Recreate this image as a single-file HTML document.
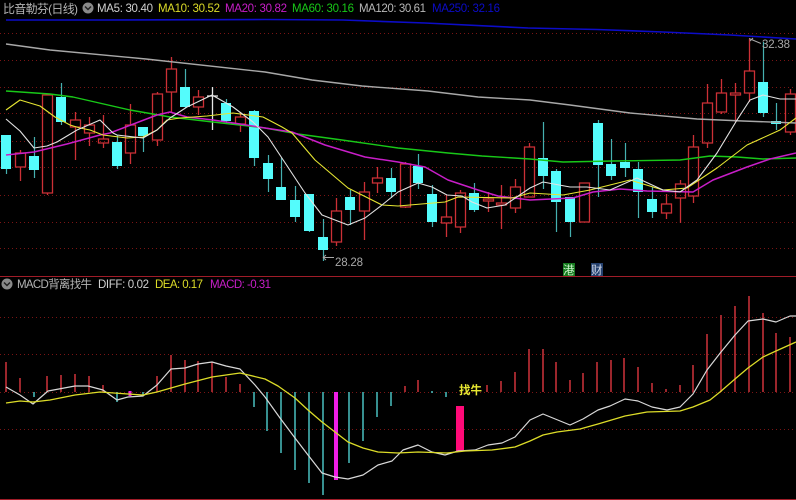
<!DOCTYPE html>
<html><head><meta charset="utf-8"><style>
html,body{margin:0;padding:0;background:#000;width:796px;height:500px;overflow:hidden}
svg{display:block;position:absolute;left:0;top:0}
text{font-family:"Liberation Sans","Noto Sans CJK SC",sans-serif;font-size:11.5px}
.l{fill:none;stroke-linejoin:round}
</style></head><body>
<svg width="796" height="500" viewBox="0 0 796 500" xmlns="http://www.w3.org/2000/svg">
<rect width="796" height="500" fill="#000"/>
<!-- grid -->
<path d="M0 33.5H796M0 60.5H796M0 87.5H796M0 113.5H796M0 141.5H796M0 167.5H796M0 195.5H796M0 222.5H796M0 248.5H796M0 317.5H796M0 354.5H796M0 392.5H796M0 429.5H796" stroke="#7a1414" stroke-width="1" stroke-dasharray="1 3" fill="none"/>
<path d="M0 276.5H796M0 499.5H796" stroke="#a01c28" stroke-width="1" fill="none"/>

<!-- cyan candle wicks -->
<path fill="none" stroke="#45b0b0" stroke-width="1.2" d="M6.5 135V174M34.5 137V178M61.5 83V125M117.5 135V169M143.5 127V152M185.5 69V108M226.5 99V124M254.5 110V166M268.5 155V192M281.5 158V200M295.5 186V222M309.5 194V232M323.5 219V261M350.5 190V225M391.5 168V198M418.5 154V189M432.5 185V227M474.5 183V212M543.5 122V189M556.5 169V232M570.5 197V237M598.5 120V197M611.5 139V180M625.5 143V177M638.5 162V218M652.5 187V218M763.5 42V117M776.5 103V130"/>
<!-- cyan bodies -->
<path fill="#54fcfc" d="M1 135h10v34h-10zM29 156h10v14h-10zM56 97h10v25h-10zM112 142h10v24h-10zM138 127h10v9h-10zM180 87h10v20h-10zM221 103h10v18h-10zM249 111h10v47h-10zM263 163h10v16h-10zM276 187h10v13h-10zM290 200h10v17h-10zM304 194h10v37h-10zM318 237h10v13h-10zM345 197h10v13h-10zM386 178h10v14h-10zM413 166h10v17h-10zM427 194h10v28h-10zM469 193h10v17h-10zM538 158h10v18h-10zM551 171h10v31h-10zM565 197h10v25h-10zM593 123h10v42h-10zM606 164h10v12h-10zM620 162h10v6h-10zM633 169h10v23h-10zM647 199h10v13h-10zM758 82h10v31h-10zM771 121h10v3h-10z"/>
<!-- red candles -->
<path fill="none" stroke="#cc3036" stroke-width="1.3" d="M20.5 150V153M15.5 153h10v14h-10zM20.5 167V181M47.5 94V95M42.5 95h10v98h-10zM47.5 193V195M75.5 112V120M70.5 120h10v7h-10zM75.5 127V160M89.5 117V125M84.5 125h10v8h-10zM89.5 133V146M103.5 115V139M98.5 139h10v4h-10zM103.5 143V148M130.5 104V125M125.5 125h10v28h-10zM130.5 153V164M157.5 92V94M152.5 94h10v46h-10zM157.5 140V146M171.5 57V69M166.5 69h10v23h-10zM171.5 92V112M198.5 90V97M193.5 97h10v10h-10zM198.5 107V115M240.5 112V117M235.5 117h10v7h-10zM240.5 124V132M336.5 198V211M331.5 211h10v31h-10zM336.5 242V246M364.5 182V192M359.5 192h10v19h-10zM364.5 211V240M377.5 167V178M372.5 178h10v5h-10zM377.5 183V193M405.5 162V164M400.5 164h10v43h-10zM405.5 207V208M446.5 195V217M441.5 217h10v6h-10zM446.5 223V237M460.5 190V193M455.5 193h10v34h-10zM460.5 227V233M488.5 192V199M483.5 199h10v2h-10zM488.5 201V212M501.5 185V203M496.5 203h10v2h-10zM501.5 205V229M515.5 179V187M510.5 187h10v21h-10zM515.5 208V213M529.5 143V147M524.5 147h10v50h-10zM579.5 183h10v39h-10zM666.5 194V204M661.5 204h10v9h-10zM666.5 213V219M680.5 180V184M675.5 184h10v14h-10zM680.5 198V223M693.5 135V147M688.5 147h10v49h-10zM693.5 196V203M707.5 84V103M702.5 103h10v40h-10zM707.5 143V148M721.5 79V93M716.5 93h10v19h-10zM721.5 112V114M735.5 83V93M730.5 93h10v2h-10zM735.5 95V122M749.5 39V71M744.5 71h10v22h-10zM749.5 93V102M790.5 89V94M785.5 94h10v38h-10zM790.5 132V135"/>
<!-- doji -->
<path fill="none" stroke="#e6e6e6" stroke-width="1.3" d="M212.5 87V130M207 96h11"/>

<!-- MA lines -->
<path class="l" stroke="#0c0cc8" stroke-width="1.6" d="M6 20L100 20L265 19.5L343 20L425 23L528 28L597 29.5L663 32L730 35L796 39"/>
<path class="l" stroke="#a8a8a8" stroke-width="1.4" d="M6 44L50 50L146 59L265 72L312 80L362 86L428 91L478 97L530 100L570 105L630 113L697 119L743 121L796 123"/>
<path class="l" stroke="#18c818" stroke-width="1.4" d="M6 91L50 94L73 97L130 110L170 117L213 122L265 128L298 134L342 140L398 148L448 153L482 156L530 159L563 162L613 161L680 160L710 156L737 157L763 159L796 158"/>
<path class="l" stroke="#c81ec8" stroke-width="1.5" d="M6 155L34 152L67 144L100 135L110 133L157 115L170 112L187 117L213 120L240 124L265 128L292 132L325 145L365 157L398 162L425 167L448 180L478 190L498 196L530 200L573 198L593 192L620 189L647 191L693 192L713 180L747 167L770 159L796 153"/>
<path class="l" stroke="#e6e632" stroke-width="1.1" d="M6 110L20 100L40 106L55 117L70 125L80 128L90 130L103 135L127 138L143 137L157 130L167 120L180 118L207 116L233 113L263 117L282 127L292 133L315 160L348 188L382 205L398 206L445 202L458 197L512 198L530 193L563 195L590 190L630 180L663 190L687 188L717 168L747 145L780 130L796 118"/>
<path class="l" stroke="#e2e2e2" stroke-width="1.1" d="M6 119L20 131L34 148L47 146L57 142L77 130L100 120L113 133L117 135L143 138L157 130L170 118L187 107L212 95L233 107L253 122L268 137L305 193L322 215L348 225L365 218L382 205L398 192L418 183L432 187L447 195L462 196L472 202L487 208L505 205L530 188L543 182L570 187L587 187L610 190L637 178L663 190L680 192L697 180L717 153L737 120L750 100L763 95L780 99L796 99"/>

<!-- price labels -->
<path fill="none" stroke="#a8a8a8" d="M323 257.5H334M323 257.5l3-2.5M323 257.5l3 2.5M749 38.5l12 5M750 41l3-3"/>
<text x="335" y="266" fill="#a8a8a8" textLength="28" lengthAdjust="spacing" font-size="11">28.28</text>
<text x="762" y="48" fill="#a8a8a8" textLength="28" lengthAdjust="spacing">32.38</text>

<!-- tags -->
<rect x="563" y="263" width="12" height="13" fill="#157a1e"/>
<rect x="591" y="263" width="12" height="13" fill="#24406e"/>
<text x="563" y="274" fill="#c8f0c8" style="font-size:11.5px">港</text>
<text x="591" y="274" fill="#d0d8e8" style="font-size:11.5px">财</text>

<!-- MACD bars -->
<path fill="none" stroke="#c23038" stroke-width="1.6" d="M6 392V362M20 392V378M47 392V376M61 392V375M75 392V374M89 392V376M103 392V385M157 392V376M171 392V355M185 392V360M198 392V361M212 392V362M226 392V377M240 392V384M405 392V386M418 392V380M487 392V385M501 392V381M515 392V372M529 392V349M543 392V349M556 392V362M570 392V380M583 392V373M597 392V362M611 392V360M624 392V358M638 392V367M652 392V383M666 392V389M680 392V385M693 392V365M707 392V334M721 392V315M735 392V306M749 392V296M763 392V313M776 392V333M790 392V337"/>
<path fill="none" stroke="#45b4b4" stroke-width="1.6" d="M34 392V397M117 392V402M143 392V395M254 392V407M267 392V431M281 392V453M295 392V470M309 392V483M323 392V495M349 392V463M363 392V441M377 392V417M391 392V406M432 391V393M446 392V397"/>
<path fill="#f01ee6" d="M128.500 391h3v5h-3zM334 392h4v88h-4z"/>
<rect x="456" y="406" width="8" height="45" fill="#ff0a78"/>

<!-- MACD lines -->
<path class="l" stroke="#d8d8d8" stroke-width="1.2" d="M6 387L20 395L33 404L48 391L75 386L88 386L103 390L117 400L128 397L143 396L157 385L171 369L185 368L198 364L212 362L226 366L240 369L255 385L265 397L280 418L295 438L308 455L322 473L335 477L348 479L363 475L378 465L392 461L403 450L418 445L432 452L445 455L458 451L475 450L488 445L502 443L515 437L530 420L543 414L570 425L583 419L598 410L610 406L625 399L638 401L652 407L667 410L680 407L693 394L707 370L721 352L735 335L748 321L763 319L776 322L790 316L796 316"/>
<path class="l" stroke="#dcdc28" stroke-width="1.3" d="M6 403L20 401L33 402L50 400L75 395L100 392L128 394L143 395L157 392L185 384L212 377L240 373L265 379L278 386L295 398L308 410L322 422L335 432L348 442L363 448L378 452L398 453L418 452L447 453L465 451L492 450L515 447L530 441L543 435L557 432L580 429L598 424L625 416L647 412L680 411L693 407L710 400L720 392L735 379L748 368L763 357L776 351L796 342"/>

<text x="459" y="394" fill="#e8e832" style="font-size:11.5px;font-weight:bold">找牛</text>

<!-- header -->
<text x="3" y="13" fill="#b4b4b4" textLength="75" lengthAdjust="spacing" style="font-size:12px">比音勒芬(日线)</text>
<circle cx="88" cy="8" r="5.500" fill="#8a8a8a"/>
<path d="M85 6.500l3 3 3-3" fill="none" stroke="#222" stroke-width="1.500"/>
<text x="97" y="12" fill="#d0d0d0" textLength="56" lengthAdjust="spacing">MA5: 30.40</text>
<text x="158" y="12" fill="#dcdc28" textLength="62" lengthAdjust="spacing">MA10: 30.52</text>
<text x="225" y="12" fill="#c81ec8" textLength="62" lengthAdjust="spacing">MA20: 30.82</text>
<text x="292" y="12" fill="#18c818" textLength="62" lengthAdjust="spacing">MA60: 30.16</text>
<text x="359" y="12" fill="#b8b8b8" textLength="67" lengthAdjust="spacing">MA120: 30.61</text>
<text x="432" y="12" fill="#0c0cc8" textLength="68" lengthAdjust="spacing">MA250: 32.16</text>

<circle cx="7" cy="284" r="5.500" fill="#8a8a8a"/>
<path d="M4 282.500l3 3 3-3" fill="none" stroke="#222" stroke-width="1.500"/>
<text x="17" y="288" fill="#b4b4b4" textLength="75" lengthAdjust="spacing">MACD背离找牛</text>
<text x="98" y="288" fill="#d0d0d0" textLength="51" lengthAdjust="spacing">DIFF: 0.02</text>
<text x="155" y="288" fill="#dcdc28" textLength="48" lengthAdjust="spacing">DEA: 0.17</text>
<text x="210" y="288" fill="#c81ec8" textLength="61" lengthAdjust="spacing">MACD: -0.31</text>
</svg>
</body></html>
